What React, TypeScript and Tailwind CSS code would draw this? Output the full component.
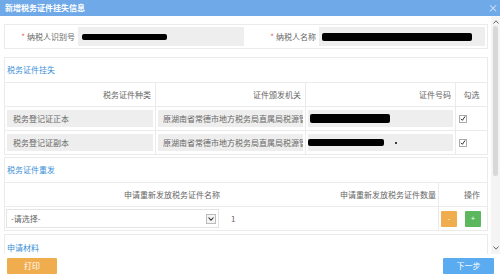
import React from 'react';

// Modal: 新增税务证件挂失信息 — taxpayer info, lost-certificate table, reissue table, footer buttons.

const font = { fontFamily: '"Noto Sans CJK SC", "Noto Sans", sans-serif' };

function Redact({ w, h = 7, className = '' }: { w: number; h?: number; className?: string }) {
  return <span className={`inline-block rounded-[2px] bg-black ${className}`} style={{ width: w, height: h }} />;
}

function Check() {
  return (
    <span className="flex h-[8px] w-[8px] items-center justify-center border border-[#aaa] bg-white">
      <svg width="7" height="7" viewBox="0 0 10 10">
        <path d="M1.5 5.5 L4 8 L8.5 1.5" fill="none" stroke="#222" strokeWidth="1.6" />
      </svg>
    </span>
  );
}

const rows = [
  { kind: '税务登记证正本', red: 1 },
  { kind: '税务登记证副本', red: 2 },
];

export default function App() {
  return (
    <div className="flex h-[279px] w-[500px] flex-col overflow-hidden bg-white text-[8px] leading-none text-[#666]" style={font}>
      {/* title bar */}
      <div className="flex h-[16px] shrink-0 items-center justify-between bg-[#6fa9e8] pl-[5px] pr-[2px]">
        <span className="font-bold text-white">新增税务证件挂失信息</span>
        <span className="text-[10px] text-[#dbeaff]">×</span>
      </div>

      <div className="flex min-h-0 flex-1">
        {/* scrolling content */}
        <div className="flex min-w-0 flex-1 flex-col gap-[8px] overflow-hidden pl-[4px] pr-[3px] pt-[8px]">
          {/* taxpayer row */}
          <div className="flex h-[25px] shrink-0 items-stretch border border-[#ebebeb] p-[2px]">
            <div className="flex w-[71px] items-center justify-end pr-[3px]">
              <span className="mr-[2px] text-[#e06060]">*</span>纳税人识别号
            </div>
            <div className="flex w-[166px] items-center bg-[#eeeeee] pl-[4px]">
              <Redact w={85} h={6} />
            </div>
            <div className="flex w-[75px] items-center justify-end pr-[3px]">
              <span className="mr-[2px] text-[#e06060]">*</span>纳税人名称
            </div>
            <div className="flex flex-1 items-center bg-[#eeeeee] pl-[3px]">
              <Redact w={150} h={8} />
            </div>
          </div>

          {/* lost certificates */}
          <div className="shrink-0 border border-[#ebebeb]">
            <div className="flex h-[24px] items-center pl-[2px] text-[#3b8fd9]">税务证件挂失</div>
            <div className="grid grid-cols-[151px_150px_150px_1fr] border-t border-[#ebebeb]">
              <div className="flex h-[23px] items-center justify-end border-r border-[#ebebeb] pr-[4px]">税务证件种类</div>
              <div className="flex items-center justify-end border-r border-[#ebebeb] pr-[4px]">证件颁发机关</div>
              <div className="flex items-center justify-end border-r border-[#ebebeb] pr-[4px]">证件号码</div>
              <div className="flex items-center justify-center">勾选</div>
              {rows.map((r) => (
                <React.Fragment key={r.kind}>
                  <div className="flex h-[24px] items-center border-r border-t border-[#ebebeb] px-[2px] py-[3px]">
                    <div className="flex h-full w-full items-center bg-[#eeeeee] pl-[6px]">{r.kind}</div>
                  </div>
                  <div className="flex items-center border-r border-t border-[#ebebeb] px-[2px] py-[3px]">
                    <div className="flex h-full w-full items-center overflow-hidden whitespace-nowrap bg-[#eeeeee] pl-[5px]">
                      原湖南省常德市地方税务局直属局税源管
                    </div>
                  </div>
                  <div className="flex items-center border-r border-t border-[#ebebeb] px-[2px] py-[3px]">
                    <div className="flex h-full w-full items-center bg-[#eeeeee] pl-[2px]">
                      {r.red === 1 ? (
                        <Redact w={80} h={9} />
                      ) : (
                        <>
                          <Redact w={76} h={7} className="-ml-[2px]" />
                          <span className="ml-[11px] inline-block h-[2px] w-[2px] rounded-full bg-black" />
                        </>
                      )}
                    </div>
                  </div>
                  <div className="flex items-center border-t border-[#ebebeb] pl-[3px]">
                    <Check />
                  </div>
                </React.Fragment>
              ))}
            </div>
          </div>

          {/* reissue */}
          <div className="-mt-[6px] shrink-0 border border-[#ebebeb]">
            <div className="flex h-[24px] items-center pl-[2px] text-[#3b8fd9]">税务证件重发</div>
            <div className="grid grid-cols-[217px_217px_1fr] border-t border-[#ebebeb]">
              <div className="flex h-[23px] items-center justify-end pr-[2px]">申请重新发放税务证件名称</div>
              <div className="flex items-center justify-end border-r border-[#ebebeb] pr-[2px]">申请重新发放税务证件数量</div>
              <div className="flex items-center justify-end pr-[7px]">操作</div>

              <div className="flex h-[24px] items-center border-t border-[#ebebeb] py-[2px] pl-[1px] pr-[3px]">
                <div className="flex h-full w-full items-center justify-between border border-[#e4e4e4] bg-white pl-[4px] pr-[2px]">
                  <span>-请选择-</span>
                  <span className="flex h-[10px] w-[10px] items-center justify-center border border-[#bbb] bg-[#f4f4f4]">
                    <svg width="6" height="4" viewBox="0 0 6 4">
                      <path d="M0.5 0.5 L3 3.2 L5.5 0.5" fill="none" stroke="#333" strokeWidth="1.1" />
                    </svg>
                  </span>
                </div>
              </div>
              <div className="flex items-center border-r border-t border-[#ebebeb] py-[2px] pl-[5px] pr-[2px]">
                <div className="flex h-full w-full items-center pl-[4px]">1</div>
              </div>
              <div className="flex items-center gap-[8px] border-t border-[#ebebeb] pl-[2px]">
                <span className="flex h-[16px] w-[16px] items-center justify-center rounded-[1px] bg-[#f0ad4e] text-[7px] text-white">-</span>
                <span className="flex h-[16px] w-[16px] items-center justify-center rounded-[1px] bg-[#5cb85c] text-[7px] text-white">+</span>
              </div>
            </div>
          </div>

          {/* materials */}
          <div className="-mt-[5px] flex h-[20px] shrink-0 items-end border border-b-0 border-[#ebebeb] pb-[2px] pl-[2px] text-[#3b8fd9]">
            申请材料
          </div>
        </div>

        {/* scrollbar */}
        <div className="flex w-[9px] shrink-0 flex-col items-center bg-[#f4f4f4] py-[4px]">
          <svg width="6" height="4" viewBox="0 0 6 4" className="mb-[2px]">
            <path d="M0.5 3.5 L3 0.8 L5.5 3.5" fill="none" stroke="#666" strokeWidth="1" />
          </svg>
          <div className="h-[150px] w-[5px] rounded-[2px] bg-[#d8d8d8]" />
          <div className="flex-1" />
          <svg width="6" height="4" viewBox="0 0 6 4">
            <path d="M0.5 0.5 L3 3.2 L5.5 0.5" fill="none" stroke="#666" strokeWidth="1" />
          </svg>
        </div>
      </div>

      {/* footer */}
      <div className="flex h-[25px] shrink-0 items-start justify-between bg-white pl-[7px] pr-[6px] pt-[4px]">
        <button className="flex h-[16px] w-[50px] items-center justify-center rounded-[1px] bg-[#f0ad4e] text-[8px] text-white">打印</button>
        <button className="flex h-[16px] w-[51px] items-center justify-center rounded-[1px] bg-[#5aabf0] text-[8px] text-white">下一步</button>
      </div>
    </div>
  );
}
